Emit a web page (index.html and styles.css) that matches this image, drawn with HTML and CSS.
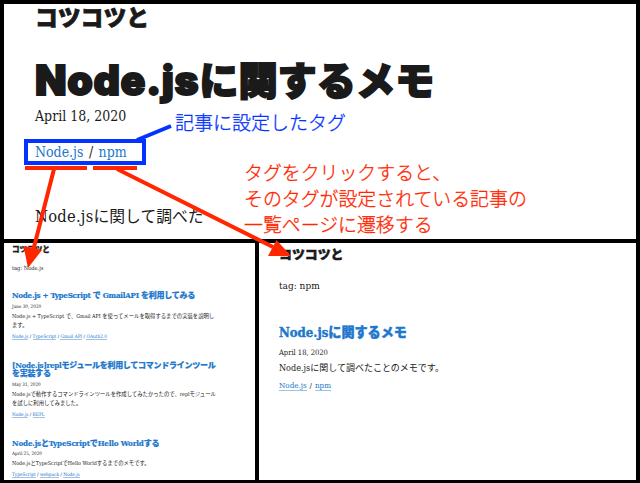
FILE: index.html
```html
<!DOCTYPE html>
<html lang="ja">
<head>
<meta charset="utf-8">
<title>コツコツと</title>
<link rel="stylesheet" href="styles.css">
</head>
<body>
<div class="board">
  <section class="panel post">
    <p class="site">コツコツと</p>
    <h1><span class="latin">Node.js</span>に関するメモ</h1>
    <p class="date">April 18, 2020</p>
    <p class="tags"><a>Node.js</a> / <a>npm</a></p>
    <p class="lead"><span class="latin">Node.js</span>に関して調べた</p>
  </section>
  <section class="panel list small">
    <p class="site">コツコツと</p>
    <p class="heading">tag: Node.js</p>
    <article>
      <h2 class="t1">Node.js + TypeScript で GmailAPI を利用してみる</h2>
      <p class="date">June 30, 2020</p>
      <p class="desc d1">Node.js + TypeScript で、Gmail API を使ってメールを取得するまでの実装を説明し<br>ます。</p>
      <p class="tags"><a>Node.js</a> / <a>TypeScript</a> / <a>Gmail API</a> / <a>OAuth2.0</a></p>
    </article>
    <article>
      <h2 class="t2">[Node.js]replモジュールを利用してコマンドラインツール<br>を実装する</h2>
      <p class="date">May 31, 2020</p>
      <p class="desc d2">Node.jsで動作するコマンドラインツールを作成してみたかったので、replモジュール<br>を試しに利用してみました。</p>
      <p class="tags"><a>Node.js</a> / <a>REPL</a></p>
    </article>
    <article>
      <h2 class="t3">Node.jsとTypeScriptでHello Worldする</h2>
      <p class="date">April 25, 2020</p>
      <p class="desc d3">Node.jsとTypeScriptでHello Worldするまでのメモです。</p>
      <p class="tags"><a>TypeScript</a> / <a>webpack</a> / <a>Node.js</a></p>
    </article>
  </section>
  <section class="panel list large">
    <p class="site">コツコツと</p>
    <p class="heading">tag: npm</p>
    <article>
      <h2>Node.jsに関するメモ</h2>
      <p class="date">April 18, 2020</p>
      <p class="desc">Node.jsに関して調べたことのメモです。</p>
      <p class="tags"><a>Node.js</a> / <a>npm</a></p>
    </article>
  </section>
  <svg class="marks" viewBox="0 0 640 483" width="640" height="483">
    <g fill="none" stroke="#0433ff" stroke-width="4">
      <rect x="26" y="141" width="118" height="22"/>
      <path d="M137 140L171 126"/>
    </g>
    <g fill="none" stroke="#ff2600" stroke-width="4">
      <path d="M25 168H87M93 168H137"/>
      <path d="M54 169L33 251M117 169L273 247"/>
    </g>
    <path fill="#ff2600" d="M28 268L23.5 246L42 250ZM291 256L268 256L276.5 240Z"/>
  </svg>
  <p class="note blue">記事に設定したタグ</p>
  <p class="note red">タグをクリックすると、<br>そのタグが設定されている記事の<br>一覧ページに遷移する</p>
</div>
</body>
</html>
```
FILE: styles.css
```css
* { box-sizing: border-box; margin: 0; padding: 0; }
body {
  background: #000;
  color: #1a1a1a;
  font-family: "DejaVu Serif Condensed", "DejaVu Serif", "Noto Sans CJK JP", serif;
  font-stretch: condensed;
}
.board {
  position: relative;
  width: 640px;
  height: 483px;
  padding: 4px 4px 3px;
  display: grid;
  grid-template: 235px 237px / 251px 377px;
  gap: 4px;
}
.panel { background: #fff; white-space: nowrap; }
.post { grid-column: 1 / 3; padding-left: 31px; }
.site { font-family: "Noto Sans CJK JP", sans-serif; font-weight: 900; }
a { color: #2077cb; }

.post .site { font-size: 22.8px; line-height: 26px; -webkit-text-stroke: 0.8px; }
.post h1 {
  margin-top: 28px;
  font: 900 39.2px/40px "Noto Sans CJK JP", sans-serif;
  -webkit-text-stroke: 1.8px;
}
.post h1 .latin { font-family: Inter, sans-serif; font-size: 41px; letter-spacing: 0.6px; -webkit-text-stroke: 1.8px; }
.post .date { margin-top: 6px; font-size: 14px; line-height: 20px; }
.post .tags { margin-top: 16px; font-size: 14px; line-height: 20px; word-spacing: 1.4px; }
.post .lead { margin-top: 45px; font-size: 15.8px; line-height: 20px; }
.post .lead .latin { font-size: 16.4px; letter-spacing: 0.25px; }

.list h2 { color: #2077cb; font-weight: 900; }
.list a { border-bottom: 1px solid #9cc4ea; }

.small { padding-left: 8px; }
.small .site { font-size: 7.6px; line-height: 12px; -webkit-text-stroke: 0.3px; }
.small .heading { margin: 8px 0 18px; font-size: 5.7px; line-height: 10px; }
.small article { margin-bottom: 19.8px; }
.small h2 { font-size: 8px; line-height: 8.6px; letter-spacing: -0.27px; -webkit-text-stroke: 0.2px; }
.small .t3 { letter-spacing: -0.17px; }
.small .date { margin-top: 3px; font-size: 4.6px; line-height: 8px; }
.small .desc { margin-top: 1px; font-size: 5.35px; line-height: 9.4px; }
.small .tags { margin-top: 1.4px; font-size: 4.75px; line-height: 9px; }

.large { padding-left: 20px; }
.large .site { font-size: 12.9px; line-height: 22px; -webkit-text-stroke: 0.5px; }
.large .heading { margin: 13px 0 30px; font-size: 10px; line-height: 16px; }
.large h2 { font-size: 13.1px; line-height: 18px; -webkit-text-stroke: 0.4px; }
.large .date { margin-top: 5px; font-size: 7.5px; line-height: 12px; }
.large .desc { margin-top: 1px; font-size: 9px; line-height: 16px; }
.large .tags { margin-top: 4px; font-size: 8px; line-height: 12px; word-spacing: 0.6px; }

.marks { position: absolute; left: 0; top: 0; }
.note {
  position: absolute;
  font: 300 18.9px/26px "Noto Sans CJK JP", sans-serif;
  -webkit-text-stroke: 0.3px;
  white-space: nowrap;
}
.blue { left: 175px; top: 109px; color: #0433ff; font-size: 19px; }
.red { left: 244px; top: 159px; color: #ff2600; }
```
